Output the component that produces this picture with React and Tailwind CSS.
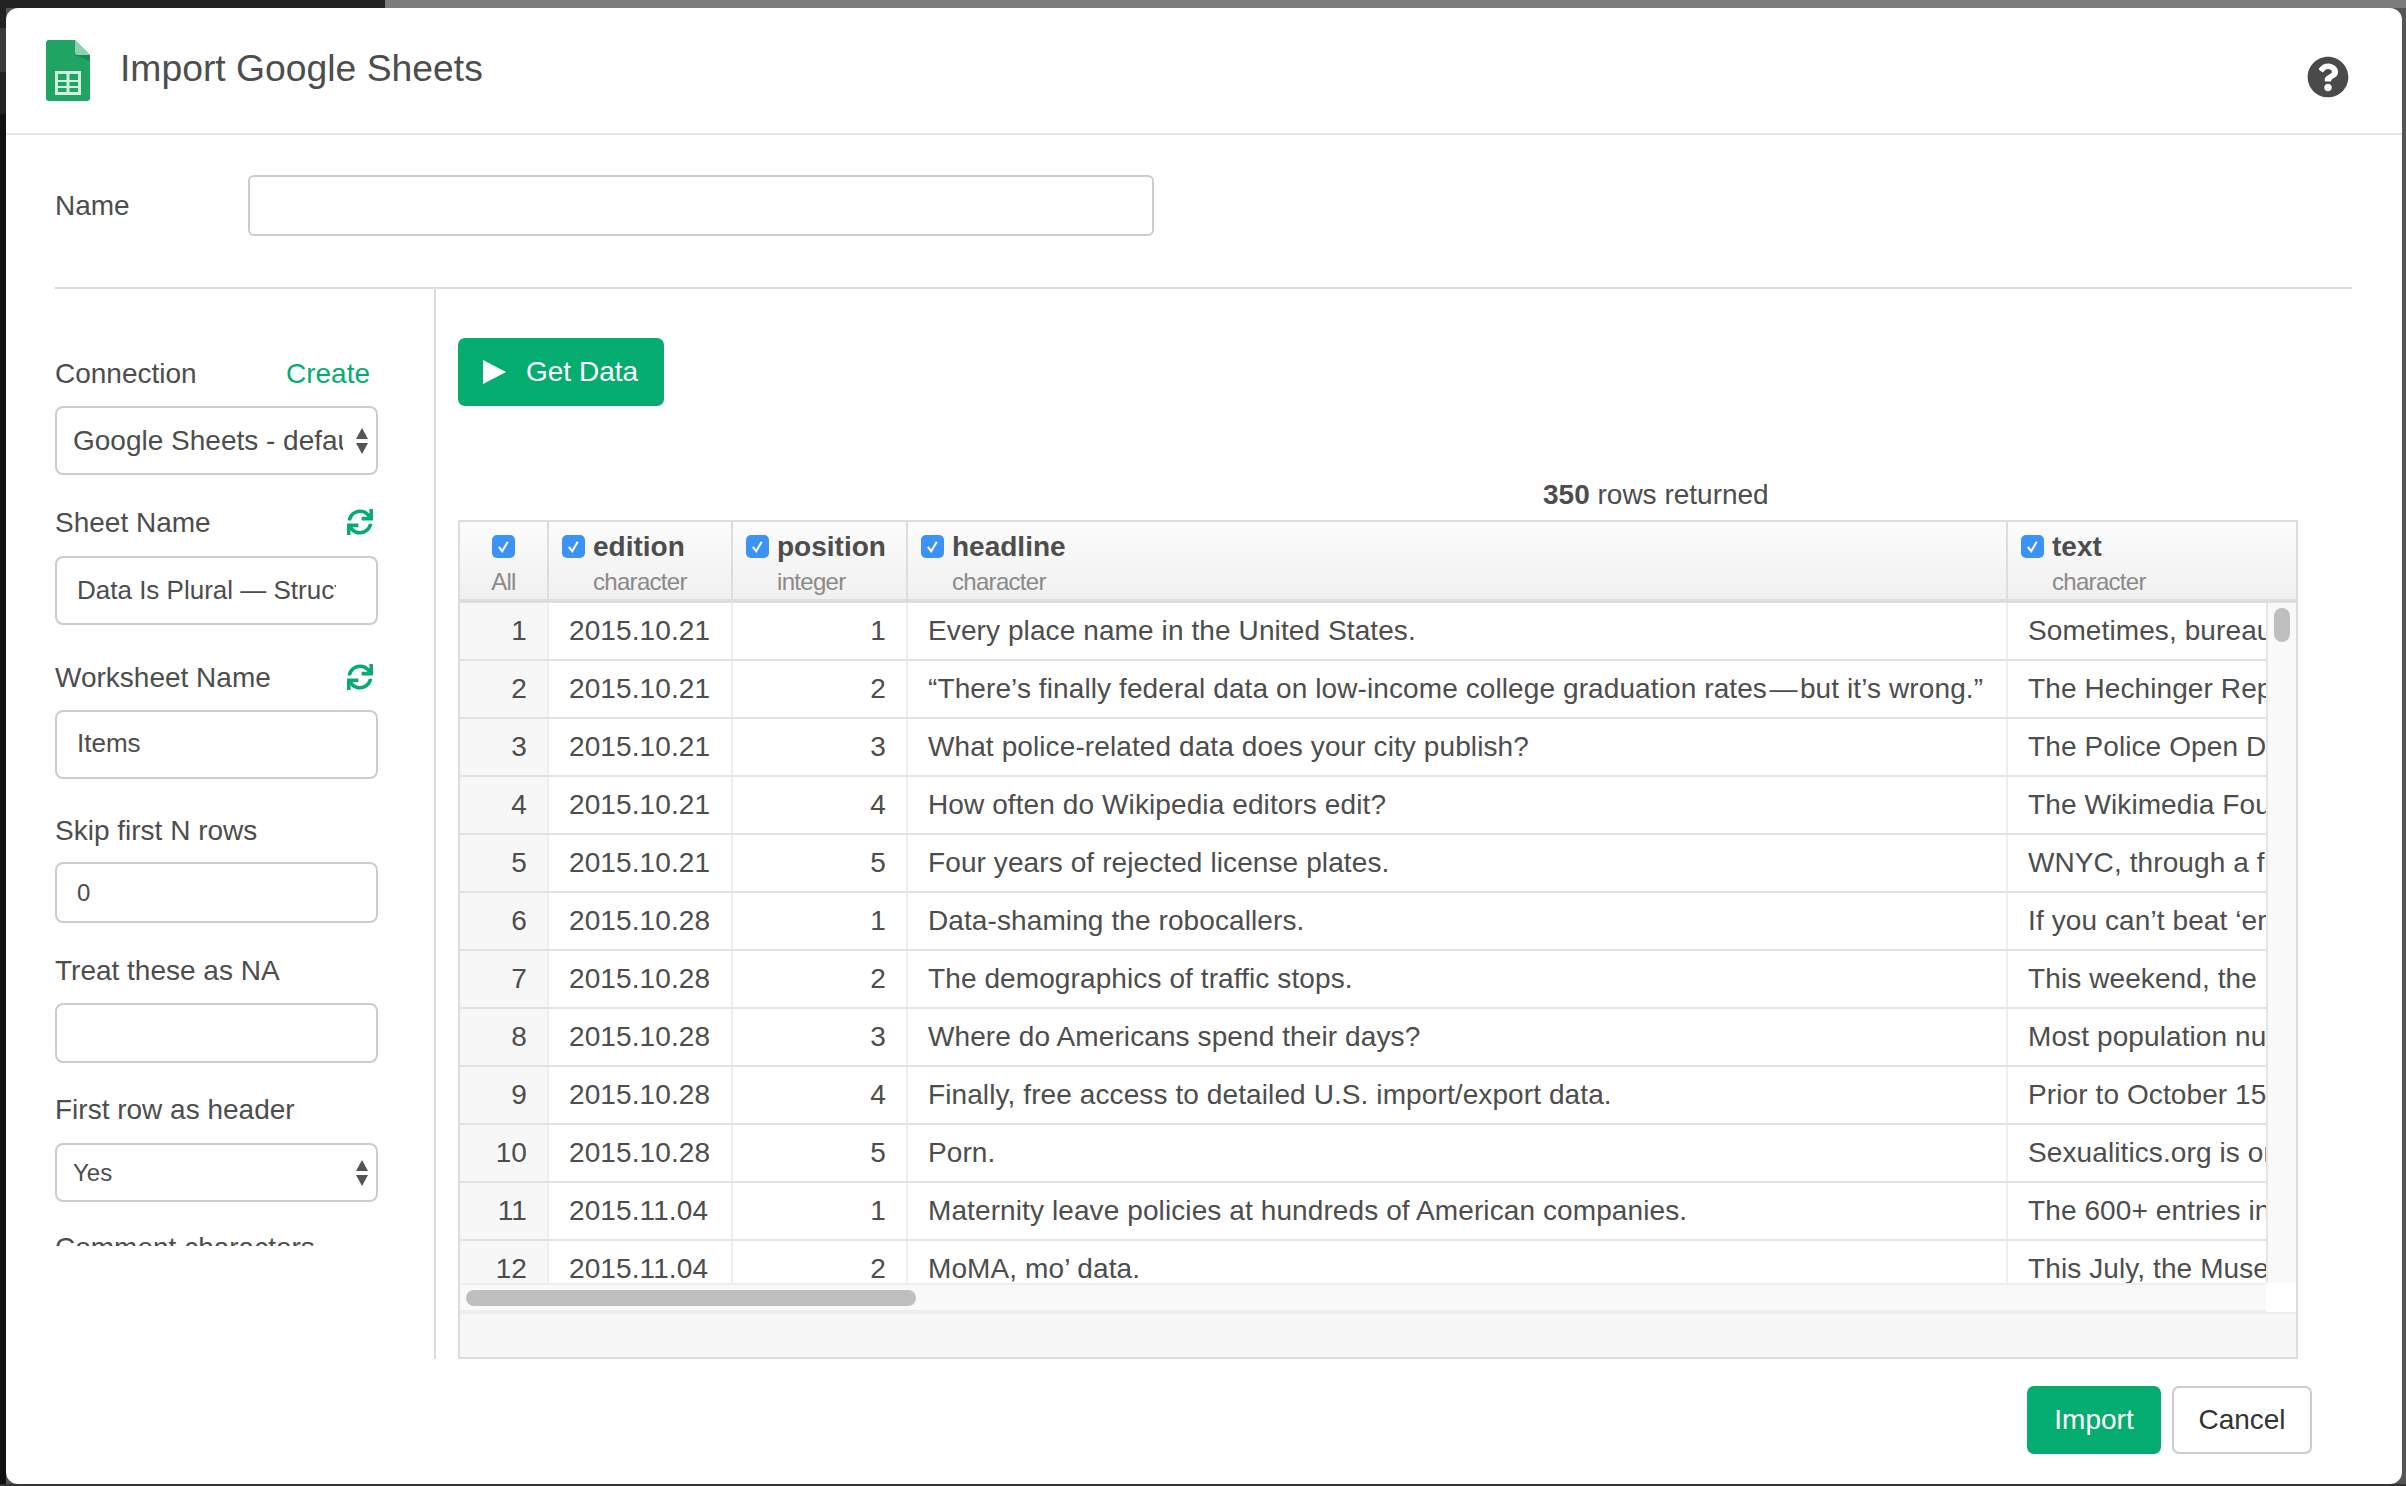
import React from 'react';
import { FaSync, FaQuestionCircle } from 'react-icons/fa';

const rows = [
  [1, '2015.10.21', 1, 'Every place name in the United States.', 'Sometimes, bureaucracy is useful'],
  [2, '2015.10.21', 2, '“There’s finally federal data on low-income college graduation rates\u200a—\u200abut it’s wrong.”', 'The Hechinger Report'],
  [3, '2015.10.21', 3, 'What police-related data does your city publish?', 'The Police Open Data'],
  [4, '2015.10.21', 4, 'How often do Wikipedia editors edit?', 'The Wikimedia Foundation'],
  [5, '2015.10.21', 5, 'Four years of rejected license plates.', 'WNYC, through a freedom'],
  [6, '2015.10.28', 1, 'Data-shaming the robocallers.', 'If you can’t beat ‘em'],
  [7, '2015.10.28', 2, 'The demographics of traffic stops.', 'This weekend, the New York'],
  [8, '2015.10.28', 3, 'Where do Americans spend their days?', 'Most population numbers'],
  [9, '2015.10.28', 4, 'Finally, free access to detailed U.S. import/export data.', 'Prior to October 15'],
  [10, '2015.10.28', 5, 'Porn.', 'Sexualitics.org is one'],
  [11, '2015.11.04', 1, 'Maternity leave policies at hundreds of American companies.', 'The 600+ entries in'],
  [12, '2015.11.04', 2, 'MoMA, mo’ data.', 'This July, the Museum'],
];

const columns = [
  { name: 'edition', type: 'character', width: 'w-[184px]' },
  { name: 'position', type: 'integer', width: 'w-[175px]' },
  { name: 'headline', type: 'character', width: 'w-[1100px]' },
  { name: 'text', type: 'character', width: 'flex-1' },
];

const Check = () => (
  <span className="flex h-[23px] w-[23px] shrink-0 items-center justify-center rounded-[5px] bg-[#3b93f7]">
    <svg viewBox="0 0 20 20" className="h-[17px] w-[17px]" fill="none" stroke="white" strokeWidth="2.4">
      <path d="M4.5 10.5 L8.5 15.5 L15 4.5" />
    </svg>
  </span>
);

const SheetsIcon = () => (
  <svg viewBox="0 0 44 61" className="h-[61px] w-[44px]">
    <path d="M3 0 H29 L44 15 V58 a3 3 0 0 1 -3 3 H3 a3 3 0 0 1 -3 -3 V3 a3 3 0 0 1 3 -3 Z" fill="#20a464" />
    <path d="M29 0 L44 15 H32 a3 3 0 0 1 -3 -3 Z" fill="#8ed1b1" />
    <path d="M29 15 H44 V21 Z" fill="#188a53" />
    <path d="M9 31 H35 V55 H9 Z M12 34 V40 H20.5 V34 Z M23.5 34 V40 H32 V34 Z M12 42 V46 H20.5 V42 Z M23.5 42 V46 H32 V42 Z M12 48 V52 H20.5 V48 Z M23.5 48 V52 H32 V48 Z" fill="#d5efdf" fillRule="evenodd" />
  </svg>
);

const Label = ({ children, right, className }) => (
  <div className={`flex h-8 items-center justify-between text-[28px] leading-8 text-[#4d4d4d] ${className}`}>
    <span>{children}</span>
    {right}
  </div>
);

const Box = ({ children, className }) => (
  <div className={`flex w-[323px] items-center overflow-hidden whitespace-nowrap rounded-[8px] border-2 border-[#ccc] bg-white text-[#4d4d4d] ${className}`}>
    {children}
  </div>
);

const Arrows = () => (
  <svg viewBox="0 0 12 26" className="absolute right-[8px] top-1/2 h-[26px] w-[12px] -translate-y-1/2" fill="#555">
    <path d="M6 0 L12 11 H0 Z M6 26 L0 15 H12 Z" />
  </svg>
);

const Refresh = () => <FaSync className="mb-[2px] mr-[5px] text-[26px] text-[#05ac70]" />;

const Sidebar = () => (
  <div className="ml-[49px] h-[1070px] w-[381px] shrink-0 border-r-2 border-[#ddd]">
    <div className="h-[957px] overflow-hidden pt-[69px]">
      <Label className="w-[315px]" right={<span className="text-[#05ac70]">Create</span>}>Connection</Label>
      <Box className="relative mt-4 h-[69px] pl-[16px] text-[28px]">
        <span className="w-[270px] overflow-hidden">Google Sheets - default</span>
        <Arrows />
      </Box>
      <Label className="mt-8 w-[323px]" right={<Refresh />}>Sheet Name</Label>
      <Box className="mt-[17px] h-[69px] pl-[20px] text-[26px]">
        <span className="w-[259px] overflow-hidden">Data Is Plural — Structured Archive</span>
      </Box>
      <Label className="mt-[37px] w-[323px]" right={<Refresh />}>Worksheet Name</Label>
      <Box className="mt-4 h-[69px] pb-[2px] pl-[20px] text-[26px]">Items</Box>
      <Label className="mt-9">Skip first N rows</Label>
      <Box className="mt-[15px] h-[61px] pl-[20px] text-[24px]">0</Box>
      <Label className="mt-8">Treat these as NA</Label>
      <Box className="mt-4 h-[60px]" />
      <Label className="mt-[31px]">First row as header</Label>
      <Box className="relative mt-[17px] h-[59px] pl-[16px] text-[24px]">
        Yes
        <Arrows />
      </Box>
      <Label className="mt-[30px]">Comment characters</Label>
    </div>
  </div>
);

const DataTable = () => (
  <div className="mt-[9px] flex h-[839px] w-[1840px] flex-col border-2 border-[#ddd] text-[#4d4d4d]">
    {/* column headers */}
    <div className="flex h-[81px] shrink-0 border-b-4 border-[#ddd] bg-gradient-to-b from-[#fcfcfc] to-[#f0f0f0]">
      <div className="flex w-[89px] shrink-0 flex-col items-center border-r-2 border-[#ddd] pt-[13px]">
        <Check />
        <span className="mt-[10px] text-[24px] leading-[28px] tracking-[-0.8px] text-[#8a8a8a]">All</span>
      </div>
      {columns.map((col, i) => (
        <div key={col.name} className={`${col.width} shrink-0 pl-[13px] pt-[13px] ${i < 3 ? 'border-r-2 border-[#ddd]' : ''}`}>
          <div className="flex h-[23px] items-center gap-2 text-[28px] font-bold">
            <Check />
            <span>{col.name}</span>
          </div>
          <div className="ml-[31px] mt-[10px] text-[24px] leading-[28px] tracking-[-0.7px] text-[#8a8a8a]">{col.type}</div>
        </div>
      ))}
    </div>

    <div className="flex h-[680px] shrink-0">
      <div className="h-full w-[1806px] shrink-0 overflow-hidden">
        {rows.map((r) => (
          <div key={r[0]} className="flex h-[58px] border-b-2 border-[#e2e2e2] text-[28px] leading-[56px] tracking-[0.1px]">
            <div className="w-[89px] shrink-0 border-r-2 border-[#eee] bg-[#f7f7f7] pr-[20px] text-right">{r[0]}</div>
            <div className="w-[184px] shrink-0 border-r-2 border-[#eee] pl-[20px]">{r[1]}</div>
            <div className="w-[175px] shrink-0 border-r-2 border-[#eee] pr-[20px] text-right">{r[2]}</div>
            <div className="w-[1100px] shrink-0 whitespace-nowrap border-r-2 border-[#eee] pl-[20px]">{r[3]}</div>
            <div className="min-w-0 flex-1 overflow-hidden whitespace-nowrap pl-[20px]">{r[4]}</div>
          </div>
        ))}
      </div>
      <div className="flex-1 border-l-2 border-[#e6e6e6] bg-[#f9f9f9] pl-[6px] pt-[5px]">
        <div className="h-[34px] w-[16px] rounded-[8px] bg-[#bfbfbf]" />
      </div>
    </div>

    <div className="flex h-[29px] shrink-0">
      <div className="w-[1806px] shrink-0 border-y-2 border-[#eee] bg-[#f9f9f9] pl-[6px] pt-[5px]">
        <div className="h-[16px] w-[450px] rounded-[8px] bg-[#bfbfbf]" />
      </div>
      <div className="flex-1 bg-white" />
    </div>
    <div className="flex-1 border-t-2 border-[#eee] bg-[#f7f7f7]" />
  </div>
);

export default function App() {
  return (
    <div className="flex h-[1486px] w-[2406px] flex-col overflow-hidden bg-[#555] font-['Liberation_Sans',Arial,sans-serif]">
      <div className="flex h-[8px] shrink-0">
        <div className="w-[385px] bg-[#212224]" />
        <div className="flex-1 bg-[#7c7c7c]" />
      </div>
      <div className="flex h-[1476px] shrink-0">
        <div className="flex w-[6px] shrink-0 flex-col">
          <div className="h-[20px] bg-[#222]" />
          <div className="h-[44px] bg-[#3a3a3a]" />
          <div className="h-[42px] bg-[#222]" />
          <div className="flex-1 bg-[#111]" />
        </div>
        <div className="flex w-[2396px] flex-col overflow-hidden rounded-[12px] bg-white">
          <header className="flex h-[127px] shrink-0 items-center border-b-2 border-[#e5e5e5] pl-[40px] pr-[53px]">
            <SheetsIcon />
            <h1 className="mb-[4px] ml-[30px] text-[37.3px] leading-none text-[#4d4d4d]">Import Google Sheets</h1>
            <FaQuestionCircle className="ml-auto mt-[12px] text-[42px] text-[#4a4a4a]" />
          </header>

          <div className="flex h-[152px] shrink-0 pt-[40px]">
            <div className="ml-[49px] h-[61px] w-[193px] text-[28px] leading-[61px] text-[#4d4d4d]">Name</div>
            <div className="h-[61px] w-[906px] rounded-[6px] border-2 border-[#ccc] bg-white" />
          </div>

          <div className="ml-[49px] mr-[50px] h-[2px] shrink-0 bg-[#ddd]" />

          <div className="flex h-[1070px] shrink-0">
            <Sidebar />
            <div className="pl-[22px] pt-[49px]">
              <button className="flex h-[68px] w-[206px] items-center rounded-[7px] bg-[#05ac70] pl-[25px] text-[28px] text-white">
                <svg viewBox="0 0 23 24" className="h-[24px] w-[23px]" fill="white">
                  <path d="M0 0 L23 12 L0 24 Z" />
                </svg>
                <span className="ml-[20px]">Get Data</span>
              </button>
              <div className="mt-[73px] pl-[1085px] text-[28px] leading-8 text-[#4d4d4d]">
                <b>350</b> rows returned
              </div>
              <DataTable />
            </div>
          </div>

          <div className="flex justify-end gap-[11px] pr-[90px] pt-[27px]">
            <button className="h-[68px] w-[134px] rounded-[7px] bg-[#05ac70] text-[28px] text-white">Import</button>
            <button className="h-[68px] w-[140px] rounded-[7px] border-2 border-[#ccc] bg-white text-[28px] text-[#333]">Cancel</button>
          </div>
        </div>
        <div className="flex-1 bg-[#555]" />
      </div>
      <div className="flex-1 bg-[#333]" />
    </div>
  );
}
